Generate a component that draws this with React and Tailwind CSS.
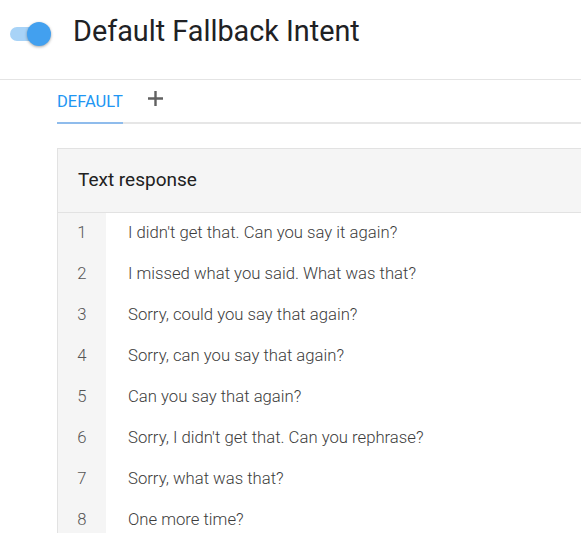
import React from "react";

const responses = [
  "I didn't get that. Can you say it again?",
  "I missed what you said. What was that?",
  "Sorry, could you say that again?",
  "Sorry, can you say that again?",
  "Can you say that again?",
  "Sorry, I didn't get that. Can you rephrase?",
  "Sorry, what was that?",
  "One more time?",
];

function Toggle() {
  return (
    <div className="relative w-[40px] h-[24px] shrink-0 mt-[22px]">
      <div className="absolute left-0 top-[5px] w-[38px] h-[14px] rounded-full bg-[#a8d3f7]" />
      <div className="absolute left-[17px] top-0 w-[24px] h-[24px] rounded-full bg-[#42a0ef] shadow-[0_1px_3px_rgba(0,0,0,0.35)]" />
    </div>
  );
}

export default function App() {
  return (
    <div className="w-[581px] h-[533px] overflow-hidden bg-white font-['Roboto',sans-serif]">
      <div className="flex items-start h-[79px] pl-[10px]">
        <Toggle />
        <h1 className="ml-[23px] mt-[17px] text-[28.8px] leading-none text-[#202124]">Default Fallback Intent</h1>
      </div>
      <div className="border-t border-[#e4e4e4]" />

      <div className="pl-[57px]">
        <div className="flex items-end h-[44px] border-b-2 border-[#e6e6e6]">
          <div className="relative h-full flex items-center pt-[2px] w-[66px]">
            <span className="text-[16.5px] text-[#2196f3]">DEFAULT</span>
            <div className="absolute left-0 right-0 bottom-[-2px] h-[2px] bg-[#8fbcec]" />
          </div>
          <div className="h-full flex items-center ml-[25px] pb-[5px]">
            <svg width="15" height="15" viewBox="0 0 15 15">
              <path d="M7.5 0v15M0 7.5h15" stroke="#616161" strokeWidth="2.4" />
            </svg>
          </div>
        </div>

        <div className="mt-[24px] border border-[#e2e2e2] border-r-0">
          <div className="h-[64px] flex items-center px-[20px] bg-[#f5f5f5] border-b border-[#e2e2e2]">
            <span className="text-[19px] text-[#212121]">Text response</span>
          </div>
          <ul>
            {responses.map((text, index) => (
              <li key={index} className="flex h-[41px]">
                <div className="w-[48px] shrink-0 bg-[#f5f5f5] flex items-center justify-center pb-[2px]">
                  <span className="text-[16.7px] font-light text-[#555]">{index + 1}</span>
                </div>
                <div className="flex items-center pl-[22px] pb-[2px]">
                  <span className="text-[16.7px] font-light text-[#3c3c3c]">{text}</span>
                </div>
              </li>
            ))}
          </ul>
        </div>
      </div>
    </div>
  );
}
